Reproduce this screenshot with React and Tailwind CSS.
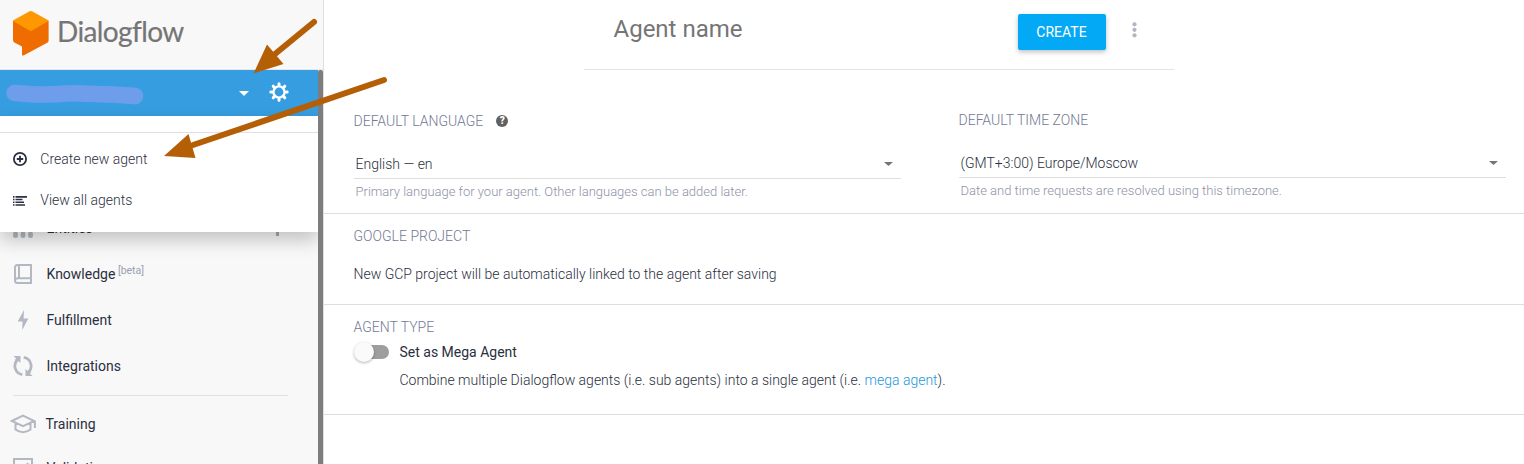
import React from "react";

function Logo() {
  return (
    <div className="flex h-[70px] shrink-0 items-start border-b border-[#e6e6e6] pl-[13px] pt-[11px]">
      <svg width="36" height="45" viewBox="0 0 36 45">
        <path d="M0 9.800H35.600V29.400Q35.600 31 34.200 31.800L10.500 44.400Q9 45 9 43.500V35.600L1.400 31.400Q0 30.600 0 29Z" fill="#ef6c00" />
        <path d="M16.600.3Q17.800-.3 19 .3L35.200 9.300Q36 9.800 35.200 10.300L17.800 20.200.4 10.300Q-.4 9.800.4 9.300Z" fill="#ff9800" />
      </svg>
      <span className="ml-[8px] font-['Lato',sans-serif] text-[28px] leading-[40px] tracking-[-0.6px] text-[#757575] [-webkit-text-stroke:0.2px_#757575]">
        Dialogflow
      </span>
    </div>
  );
}

function Gear() {
  return (
    <svg width="20" height="20" viewBox="-10 -10 20 20" fill="none" stroke="#fff">
      <circle r="5.600" strokeWidth="2.400" />
      <g strokeWidth="3" strokeLinecap="round">
        <path d="M0-7.200V-8.200M0 7.200V8.200M-7.200 0H-8.200M7.200 0H8.200M5.100-5.100l.7-.7M5.100 5.100l.7.7M-5.100 5.100l-.7.7M-5.100-5.100l-.7-.7" />
      </g>
    </svg>
  );
}

function AgentBar() {
  return (
    <div className="flex h-[46px] items-center bg-[#369ee0]">
      <svg className="ml-[5px] shrink-0" width="140" height="24" viewBox="0 0 140 24">
        <path d="M9.500 12C20 12 25 14 43 13.500S60 11.500 78 12.500 110 13 130 15" fill="none" stroke="#6e9eeb" strokeWidth="16.500" strokeLinecap="round" strokeLinejoin="round" />
      </svg>
      <svg className="ml-[94px]" width="10" height="5" viewBox="0 0 10 5">
        <path d="M0 0H10L5 5Z" fill="#fff" />
      </svg>
      <div className="mb-[2px] ml-[19.5px]"><Gear /></div>
    </div>
  );
}

function AgentMenu() {
  return (
    <div className="absolute inset-x-0 top-[46px] z-10 h-[116px] bg-white pt-4 shadow-[0_8px_17px_0_rgba(0,0,0,0.22)]">
      <div className="flex flex-col border-t border-[#e0e0e0] pt-[6px] text-[14px] font-light text-[#2b2f3e]">
        <div className="flex h-[41px] items-center pl-[13px]">
          <svg className="mb-[1px]" width="14" height="14" viewBox="0 0 14 14" fill="none" stroke="#2b3042">
            <circle cx="7" cy="7" r="6.100" strokeWidth="1.800" />
            <path d="M7 3.800V10.200M3.800 7H10.200" strokeWidth="1.800" />
          </svg>
          <span className="ml-[13.3px]">Create new agent</span>
        </div>
        <div className="flex h-[41px] items-center pl-[13px]">
          <svg width="14" height="10" viewBox="0 0 14 10" fill="#2b3042">
            <path d="M0 0H1.500V1.700H0ZM2.500 0H14V1.700H2.500ZM0 2.700H1.500V4.300H0ZM2.500 2.700H9.500V4.300H2.500ZM0 5.400H1.500V7H0ZM2.500 5.400H11V7H2.500ZM0 8.200H1.500V9.800H0ZM2.500 8.200H12V9.800H2.500Z" />
          </svg>
          <span className="ml-[13.3px]">View all agents</span>
        </div>
      </div>
    </div>
  );
}

function EntitiesIcon() {
  return (
    <svg width="20" height="20" viewBox="0 0 20 20" fill="#b3b8c2">
      <path d="M1 13H4Q5 15 5 17.500Q5 20 2.500 20T0 17.500Q0 15 1 13ZM8.500 13H11.500Q12.500 15 12.500 17.500Q12.500 20 10 20T7.500 17.500Q7.500 15 8.500 13ZM16 13H19Q20 15 20 17.500Q20 20 17.500 20T15 17.500Q15 15 16 13Z" />
    </svg>
  );
}

function BookIcon() {
  return (
    <svg width="20" height="20" viewBox="0 0 20 20" fill="none" stroke="#b3b8c2" strokeWidth="2">
      <path d="M18 1H4.500Q2 1 2 3.500V16.500Q2 19 4.500 19H18ZM6 1V14M2.200 16Q2.800 14.200 4.500 14.200H18" />
    </svg>
  );
}

function BoltIcon() {
  return (
    <svg width="20" height="20" viewBox="0 0 20 20" fill="#b3b8c2">
      <path d="M11 0 4.700 11.400H9.500L9.300 20 15.300 8.400H10.600Z" />
    </svg>
  );
}

function SyncIcon() {
  return (
    <svg width="20" height="20" viewBox="0 0 20 20">
      <g fill="none" stroke="#b3b8c2" strokeWidth="2.800">
        <path d="M9.300 18.600A8.700 8.700 0 0 1 4.500 3.800M10.700 1.400A8.700 8.700 0 0 1 15.500 16.200" />
      </g>
      <path d="M.5 0H7.500V7L5.300 4.900 3.800 6.200 1.700 4 3.100 2.600ZM19.500 20H12.500V13L14.700 15.100 16.200 13.800 18.300 16 16.900 17.400Z" fill="#b3b8c2" />
    </svg>
  );
}

function CapIcon() {
  return (
    <svg width="26" height="20" viewBox="0 0 26 20" fill="none" stroke="#b3b8c2" strokeWidth="2">
      <path d="M1.800 7 13 1.700 24.200 7 13 12.200ZM5.500 9V15.500Q9 18.200 13 18.200T20.500 15.500V9M24.900 7V14" />
    </svg>
  );
}

function ValidationIcon() {
  return (
    <svg width="20" height="20" viewBox="0 0 20 20" fill="none" stroke="#b3b8c2" strokeWidth="2">
      <path d="M1 1H19V19H1ZM5 11 8.500 14.500 15 5" />
    </svg>
  );
}

function NavItem({ icon, label, tag, trailing, height = "h-[46px]", inset = "pl-[13px]", gap = "ml-[13.5px]" }) {
  return (
    <div className={`flex shrink-0 items-center ${height} ${inset}`}>
      {icon}
      <span className={`${gap} text-[14px] text-[#2b2f3e]`}>{label}</span>
      {tag && <span className="mb-[7px] ml-[2.5px] text-[10.5px] leading-[14px] text-[#9a9fb0]">{tag}</span>}
      {trailing}
    </div>
  );
}

function Sidebar() {
  return (
    <aside className="flex w-[324px] shrink-0 flex-col border-r border-[#e0e0e0] bg-[#f8f8f8]">
      <Logo />
      <div className="flex min-h-0 flex-1">
        <div className="relative w-[318px] shrink-0 overflow-hidden">
          <AgentBar />
          <AgentMenu />
          <nav className="flex flex-col pt-[89px]">
            <NavItem
              icon={<EntitiesIcon />}
              label="Entities"
              trailing={
                <svg className="ml-auto mr-[36px]" width="10" height="16" viewBox="0 0 10 16">
                  <path d="M4 0H7V16H4Z" fill="#a4a9b5" />
                </svg>
              }
            />
            <NavItem icon={<BookIcon />} label="Knowledge" tag="[beta]" />
            <NavItem icon={<BoltIcon />} label="Fulfillment" />
            <NavItem icon={<SyncIcon />} label="Integrations" />
            <div className="mb-[5px] ml-[13px] mt-[6px] w-[275px] border-t border-[#e0e0e0]" />
            <NavItem icon={<CapIcon />} label="Training" inset="pl-[10px]" gap="ml-[9.5px]" />
            <NavItem icon={<ValidationIcon />} label="Validation" height="h-[42px]" />
          </nav>
        </div>
        <div className="w-[5px] rounded-t-[2px] bg-[#7d7d7d]" />
      </div>
    </aside>
  );
}

function Select({ label, help, value, hint }) {
  return (
    <div className="flex flex-col">
      <div className="-ml-[0.5px] flex h-[20px] items-center text-[14px] font-light text-[#737994]">
        {label}
        {help && (
          <span className="ml-[13px] flex size-[12px] items-center justify-center rounded-full bg-[#616161] text-[10px] font-black leading-none text-white">?</span>
        )}
      </div>
      <div className="mt-[19px] flex h-[29px] items-center border-b border-[#dedede] pl-[1.5px] pr-[8px] text-[14px] font-light text-[#2b2f3e]">
        {value}
        <svg className="ml-auto" width="9" height="4" viewBox="0 0 9 4">
          <path d="M0 0H9L4.500 4Z" fill="#757575" />
        </svg>
      </div>
      <div className="mt-[4px] pl-[1.5px] text-[13px] font-light leading-[18px] text-[#8e93a6]">{hint}</div>
    </div>
  );
}

function SectionTitle({ children }) {
  return <h2 className="text-[14px] font-light leading-[20px] text-[#737994]">{children}</h2>;
}

function Main() {
  return (
    <main className="flex flex-1 flex-col bg-white">
      <header className="ml-[260px] flex h-[70px] w-[590px] items-start border-b border-[#e4e4e4] pl-[29.5px]">
        <span className="mt-[13px] w-[404.5px] text-[24px] leading-[32px] text-[#757575]">Agent name</span>
        <button className="mt-[14px] h-[36px] w-[88px] rounded-[2px] bg-[#03a9f4] pr-[1px] text-[14px] text-white shadow-[0_2px_5px_0_rgba(0,0,0,0.26)]">CREATE</button>
        <svg className="ml-[26px] mt-[22px]" width="5" height="16" viewBox="0 0 5 16" fill="#b3b6c2">
          <circle cx="2.500" cy="2.300" r="2.100" />
          <circle cx="2.500" cy="7.800" r="2.100" />
          <circle cx="2.500" cy="13.300" r="2.100" />
        </svg>
      </header>
      <section className="flex h-[144px] gap-[58px] border-b border-[#dedede] pl-[30px]">
        <div className="w-[547px] pt-[41px]">
          <Select label="DEFAULT LANGUAGE" help value="English — en" hint="Primary language for your agent. Other languages can be added later." />
        </div>
        <div className="w-[547px] pt-[40px]">
          <Select label="DEFAULT TIME ZONE" value="(GMT+3:00) Europe/Moscow" hint="Date and time requests are resolved using this timezone." />
        </div>
      </section>
      <section className="h-[91px] border-b border-[#dedede] pl-[29.5px] pt-[12px]">
        <SectionTitle>GOOGLE PROJECT</SectionTitle>
        <p className="mt-[18px] text-[14px] font-light leading-[20px] text-[#2b2f3e]">New GCP project will be automatically linked to the agent after saving</p>
      </section>
      <section className="h-[110px] border-b border-[#dedede] pl-[29.5px] pt-[12px]">
        <SectionTitle>AGENT TYPE</SectionTitle>
        <div className="mt-[5px] flex h-[20px] items-center">
          <span className="flex h-[14px] w-[35px] items-center rounded-full bg-gradient-to-r from-transparent from-[30%] to-[#9e9e9e] to-[30%]">
            <span className="size-[20px] rounded-full bg-[#fafafa] shadow-[0_1px_3px_rgba(0,0,0,0.3)]" />
          </span>
          <span className="ml-[11px] text-[14px] text-[#2b2f3e]">Set as Mega Agent</span>
        </div>
        <p className="ml-[46px] mt-[8px] text-[14px] font-light leading-[20px] text-[#2b2f3e]">
          Combine multiple Dialogflow agents (i.e. sub agents) into a single agent (i.e. <a className="text-[#2196dc]">mega agent</a>).
        </p>
      </section>
    </main>
  );
}

function Arrows() {
  return (
    <svg className="pointer-events-none absolute left-0 top-0 z-20" width="400" height="170" viewBox="0 0 400 170">
      <g stroke="#b45f06" strokeWidth="6" strokeLinecap="round">
        <path d="M314 22 275 54M384 80 193 145" />
      </g>
      <path d="M253.500 73.500 267 44.500 283.500 64ZM164 156 188.500 134 195.500 158Z" fill="#b45f06" />
    </svg>
  );
}

export default function App() {
  return (
    <div className="relative flex h-[464px] w-[1524px] overflow-hidden bg-white font-['Roboto',sans-serif]">
      <Sidebar />
      <Main />
      <Arrows />
    </div>
  );
}
